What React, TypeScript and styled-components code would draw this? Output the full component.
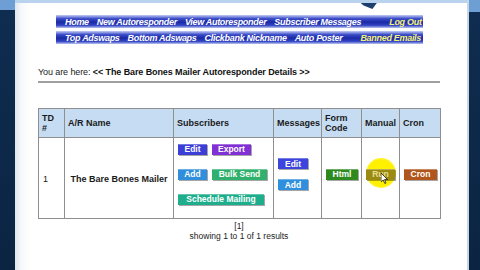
import React from "react";
import styled, { createGlobalStyle } from "styled-components";

const Global = createGlobalStyle`
  html, body { margin: 0; padding: 0; width: 480px; height: 270px; overflow: hidden; background: #0e2a4c; }
  * { box-sizing: border-box; }
`;

const Frame = styled.div`
  width: 480px;
  height: 270px;
  display: grid;
  grid-template-columns: 15px 1fr 13px;
  background: #0e2a4c;
  font-family: "Liberation Sans", Arial, sans-serif;
`;

const Side = styled.div<{ $top: number }>`
  background: linear-gradient(to bottom, #6d9fd4 0, #6d9fd4 ${(p) => p.$top}px, #0f2d50 ${(p) => p.$top}px, #0b2442 100%);
`;

const RightSide = styled(Side)`
  border-left: 2px solid #c9d6e4;
`;

const Panel = styled.div`
  position: relative;
  background: linear-gradient(to right, #dfe6ee 0, #f6f8fa 6px, #ffffff 16px);
  border-top: 3px solid #b9d3ee;
  display: flex;
  flex-direction: column;
  overflow: hidden;
`;

const Nav = styled.div`
  margin: 12px 0 0 41px;
  width: 367px;
  display: flex;
  flex-direction: column;
  gap: 3px;
`;

const NavRow = styled.div`
  height: 13px;
  display: flex;
  align-items: center;
  gap: 8px;
  padding: 0 6px 0 9px;
  background: linear-gradient(to bottom, #c4cdf4 0%, #3a4cc8 28%, #1a28a4 55%, #3446c4 80%, #bcc6f0 100%);
  font-family: "Liberation Sans", Arial, sans-serif;
  font-style: italic;
  font-weight: bold;
  font-size: 9px;
  letter-spacing: -0.3px;
  white-space: nowrap;
`;

const NavLink = styled.span<{ $yellow?: boolean; $push?: number }>`
  color: ${(p) => (p.$yellow ? "#f4f27a" : "#ffffff")};
  margin-left: ${(p) => (p.$push ? `${p.$push}px` : "0")};
`;

const Crumb = styled.div`
  margin: 23px 0 0 23px;
  font-size: 9px;
  letter-spacing: -0.1px;
  color: #222;
  padding-bottom: 4px;
  width: 402px;
  border-bottom: 2px solid #a0a0a0;
`;

const Bold = styled.b`
  color: #111;
`;

const Table = styled.table`
  margin: 25px 0 0 23px;
  width: 402px;
  border-collapse: collapse;
  table-layout: fixed;
  font-size: 9px;
  color: #1a1a1a;
  border: 1px solid #8f8f8f;
`;

const Th = styled.th<{ $w: number }>`
  width: ${(p) => p.$w}px;
  height: 29px;
  background: #c6dcf3;
  border: 1px solid #8f8f8f;
  text-align: left;
  padding: 0 3px;
  font-weight: bold;
  line-height: 10px;
  vertical-align: middle;
`;

const Td = styled.td<{ $center?: boolean; $lift?: boolean }>`
  height: 81px;
  border: 1px solid #8f8f8f;
  padding: ${(p) => (p.$lift ? "0 4px 8px 4px" : "1px 4px 0 4px")};
  vertical-align: middle;
  text-align: ${(p) => (p.$center ? "center" : "left")};
`;

const NameCell = styled(Td)`
  font-weight: bold;
  font-size: 9px;
  white-space: nowrap;
`;

const BtnStack = styled.div<{ $gap: number }>`
  display: flex;
  flex-direction: column;
  align-items: flex-start;
  gap: ${(p) => p.$gap}px;
`;

const BtnRow = styled.div`
  display: flex;
  gap: 5px;
`;

const Btn = styled.span<{ $bg: string; $w: number }>`
  display: inline-flex;
  align-items: center;
  justify-content: center;
  width: ${(p) => p.$w}px;
  height: 11px;
  background: ${(p) => p.$bg};
  color: #ffffff;
  font-weight: bold;
  font-size: 8.5px;
  box-shadow: 1px 1px 0 rgba(0, 0, 0, 0.35), inset 0 1px 0 rgba(255, 255, 255, 0.3);
  white-space: nowrap;
`;

const RunWrap = styled.div`
  position: relative;
  display: inline-block;
`;

const Glow = styled.div`
  position: absolute;
  left: 0px;
  top: -11px;
  width: 30px;
  height: 30px;
  border-radius: 50%;
  background: radial-gradient(circle, #fff200 0%, #fff000 60%, rgba(255, 240, 0, 0.6) 80%, rgba(255, 240, 0, 0) 100%);
`;

const RunBtn = styled(Btn)`
  position: relative;
  color: #e8e090;
`;

const Cursor = styled.svg`
  position: absolute;
  left: 15px;
  top: 4px;
`;

const Pager = styled.div`
  width: 402px;
  margin-left: 23px;
  text-align: center;
  font-size: 8.5px;
  line-height: 10px;
  color: #222;
  padding-top: 2px;
`;

const LogoBit = styled.div`
  position: absolute;
  left: 342px;
  top: -3px;
  width: 22px;
  height: 9px;
  background: #1d3f6e;
  clip-path: polygon(0 0, 100% 0, 70% 100%, 30% 60%);
`;

export default function App() {
  return (
    <>
      <Global />
      <Frame>
        <Side $top={10} />
        <Panel>
          <LogoBit />
          <Nav>
            <NavRow>
              <NavLink>Home</NavLink>
              <NavLink>New Autoresponder</NavLink>
              <NavLink>View Autoresponder</NavLink>
              <NavLink>Subscriber Messages</NavLink>
              <NavLink $yellow $push={20}>Log Out</NavLink>
            </NavRow>
            <NavRow>
              <NavLink>Top Adswaps</NavLink>
              <NavLink>Bottom Adswaps</NavLink>
              <NavLink>Clickbank Nickname</NavLink>
              <NavLink>Auto Poster</NavLink>
              <NavLink $yellow $push={10}>Banned Emails</NavLink>
            </NavRow>
          </Nav>
          <Crumb>
            You are here: <Bold>&lt;&lt; The Bare Bones Mailer Autoresponder Details &gt;&gt;</Bold>
          </Crumb>
          <Table>
            <thead>
              <tr>
                <Th $w={26}>TD<br />#</Th>
                <Th $w={109}>A/R Name</Th>
                <Th $w={100}>Subscribers</Th>
                <Th $w={48}>Messages</Th>
                <Th $w={40}>Form<br />Code</Th>
                <Th $w={38}>Manual</Th>
                <Th $w={41}>Cron</Th>
              </tr>
            </thead>
            <tbody>
              <tr>
                <Td>1</Td>
                <NameCell $center>The Bare Bones Mailer</NameCell>
                <Td $lift>
                  <BtnStack $gap={14}>
                    <BtnRow>
                      <Btn $bg="#3c3ed8" $w={29}>Edit</Btn>
                      <Btn $bg="#8030d4" $w={39}>Export</Btn>
                    </BtnRow>
                    <BtnRow>
                      <Btn $bg="#2f8fdc" $w={29}>Add</Btn>
                      <Btn $bg="#2fb06c" $w={55}>Bulk Send</Btn>
                    </BtnRow>
                    <Btn $bg="#1fae8c" $w={86}>Schedule Mailing</Btn>
                  </BtnStack>
                </Td>
                <Td $lift>
                  <BtnStack $gap={10}>
                    <Btn $bg="#3c44dc" $w={30}>Edit</Btn>
                    <Btn $bg="#2f8fdc" $w={30}>Add</Btn>
                  </BtnStack>
                </Td>
                <Td $lift>
                  <Btn $bg="#2e8a1f" $w={32}>Html</Btn>
                </Td>
                <Td $lift>
                  <RunWrap>
                    <Glow />
                    <RunBtn $bg="#9a8a12" $w={29}>Run</RunBtn>
                    <Cursor width="8" height="11" viewBox="0 0 8 11">
                      <path d="M0 0 L0 9 L2.2 7 L3.8 10.5 L5 10 L3.5 6.6 L6.5 6.6 Z" fill="#fff" stroke="#000" strokeWidth="0.7" />
                    </Cursor>
                  </RunWrap>
                </Td>
                <Td $lift>
                  <Btn $bg="#b0561c" $w={33}>Cron</Btn>
                </Td>
              </tr>
            </tbody>
          </Table>
          <Pager>
            [1]
            <br />
            showing 1 to 1 of 1 results
          </Pager>
        </Panel>
        <RightSide $top={12} />
      </Frame>
    </>
  );
}
